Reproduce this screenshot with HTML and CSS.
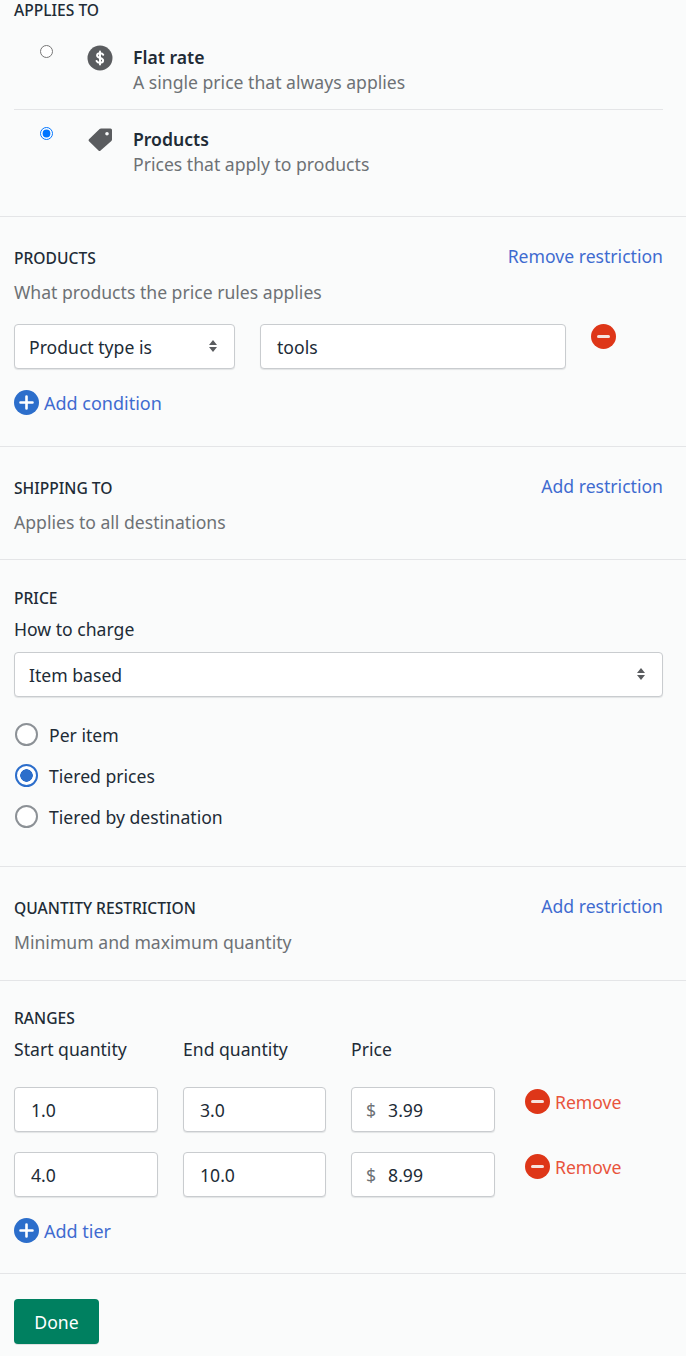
FILE: index.html
```html
<!doctype html>
<html lang="en">
  <head>
    <meta charset="UTF-8" />
    <title>Shipping rate</title>
    <link rel="stylesheet" href="styles.css">
  </head>
  <body>
    <!-- Applies to -->
    <section class="section section-applies">
      <h2 class="heading">Applies to</h2>
      <label class="option">
        <input class="option-radio" type="radio" name="applies" />
        <svg class="option-icon" viewBox="0 0 26 26">
          <circle cx="13" cy="13" r="12.500" fill="#5a5c5f" />
          <path d="M16.200 9.800c-.5-1-1.700-1.500-3.100-1.500-1.700 0-3 .8-3 2.300 0 3 6 1.700 6 4.800 0 1.500-1.400 2.300-3.200 2.300-1.500 0-2.700-.6-3.300-1.700" fill="none" stroke="#fff" stroke-width="2" stroke-linecap="round" />
          <path d="M13 6.500v13" stroke="#fff" stroke-width="2" stroke-linecap="round" />
        </svg>
        <span class="option-text">
          <strong>Flat rate</strong>
          <span>A single price that always applies</span>
        </span>
      </label>
      <label class="option">
        <input class="option-radio" type="radio" name="applies" checked />
        <svg class="option-icon" viewBox="0 0 26 26">
          <path fill-rule="evenodd" fill="#5a5c5f" d="M14 1.500h9.500a1.500 1.500 0 0 1 1.500 1.500v9.500a2 2 0 0 1-.6 1.400L13.600 23.600a1.500 1.500 0 0 1-2.100 0L2 14.300a1.500 1.500 0 0 1 0-2.100L12.600 2.100a2 2 0 0 1 1.400-.6zM20 5a1.800 1.800 0 1 0 0 3.600 1.800 1.800 0 0 0 0-3.600z" />
        </svg>
        <span class="option-text">
          <strong>Products</strong>
          <span>Prices that apply to products</span>
        </span>
      </label>
    </section>

    <!-- Products -->
    <section class="section section-products">
      <div class="section-head">
        <h2 class="heading">Products</h2>
        <a class="link" href="#">Remove restriction</a>
      </div>
      <p class="muted">What products the price rules applies</p>
      <div class="condition">
        <div class="select-wrap select-condition">
          <select class="field">
            <option>Product type is</option>
          </select>
          <svg class="select-arrows" viewBox="0 0 10 14">
            <path d="M5 1l4 5H1zM5 13L1 8h8z" fill="#5a5c5f" />
          </svg>
        </div>
        <input class="field input-condition" type="text" value="tools" />
        <svg class="round-icon" viewBox="0 0 25 25">
          <circle cx="12.500" cy="12.500" r="12.500" fill="#de3618" />
          <rect x="6" y="11" width="13" height="3" rx="1.500" fill="#f6e3df" />
        </svg>
      </div>
      <a class="link add-link" href="#">
        <svg class="round-icon" viewBox="0 0 25 25">
          <circle cx="12.500" cy="12.500" r="12.500" fill="#2c6ecb" />
          <path d="M12.500 6.500v12M6.500 12.500h12" stroke="#fff" stroke-width="2.600" stroke-linecap="round" />
        </svg>
        Add condition
      </a>
    </section>

    <!-- Shipping to -->
    <section class="section section-shipping">
      <div class="section-head">
        <h2 class="heading">Shipping to</h2>
        <a class="link" href="#">Add restriction</a>
      </div>
      <p class="muted">Applies to all destinations</p>
    </section>

    <!-- Price -->
    <section class="section section-price">
      <h2 class="heading">Price</h2>
      <label class="field-label" for="charge">How to charge</label>
      <div class="select-wrap">
        <select class="field" id="charge">
          <option>Item based</option>
        </select>
        <svg class="select-arrows" viewBox="0 0 10 14">
          <path d="M5 1l4 5H1zM5 13L1 8h8z" fill="#5a5c5f" />
        </svg>
      </div>
      <div class="radio-list">
        <label class="radio-row"><input type="radio" name="charge" />Per item</label>
        <label class="radio-row"><input type="radio" name="charge" checked />Tiered prices</label>
        <label class="radio-row"><input type="radio" name="charge" />Tiered by destination</label>
      </div>
    </section>

    <!-- Quantity restriction -->
    <section class="section section-quantity">
      <div class="section-head">
        <h2 class="heading">Quantity restriction</h2>
        <a class="link" href="#">Add restriction</a>
      </div>
      <p class="muted">Minimum and maximum quantity</p>
    </section>

    <!-- Ranges -->
    <section class="section section-ranges">
      <h2 class="heading">Ranges</h2>
      <div class="tier-grid tier-labels">
        <span>Start quantity</span>
        <span>End quantity</span>
        <span>Price</span>
      </div>
      <div class="tier-grid tier-row">
        <input class="field" type="text" value="1.0" />
        <input class="field" type="text" value="3.0" />
        <div class="money field"><span>$</span>3.99</div>
        <a class="remove-link" href="#">
          <svg class="round-icon" viewBox="0 0 25 25">
            <circle cx="12.500" cy="12.500" r="12.500" fill="#de3618" />
            <rect x="6" y="11" width="13" height="3" rx="1.500" fill="#f6e3df" />
          </svg>
          Remove
        </a>
      </div>
      <div class="tier-grid tier-row">
        <input class="field" type="text" value="4.0" />
        <input class="field" type="text" value="10.0" />
        <div class="money field"><span>$</span>8.99</div>
        <a class="remove-link" href="#">
          <svg class="round-icon" viewBox="0 0 25 25">
            <circle cx="12.500" cy="12.500" r="12.500" fill="#de3618" />
            <rect x="6" y="11" width="13" height="3" rx="1.500" fill="#f6e3df" />
          </svg>
          Remove
        </a>
      </div>
      <a class="link add-link" href="#">
        <svg class="round-icon" viewBox="0 0 25 25">
          <circle cx="12.500" cy="12.500" r="12.500" fill="#2c6ecb" />
          <path d="M12.500 6.500v12M6.500 12.500h12" stroke="#fff" stroke-width="2.600" stroke-linecap="round" />
        </svg>
        Add tier
      </a>
    </section>

    <div class="footer">
      <button class="btn-done">Done</button>
    </div>
  </body>
</html>
```

FILE: styles.css
```css
:root {
  --bg-color: #fafbfb;
  --text-color: #212b36;
  --muted-color: #6d7175;
  --link-color: #3f6bd0;
  --blue-color: #2c6ecb;
  --red-color: #de3618;
  --line-color: #e4e5e7;
  --field-border: #c9cccf;
}

* {
  box-sizing: border-box;
}

body {
  margin: 0;
  font-family: "Noto Sans", sans-serif;
  font-size: 17.6px;
  line-height: 24px;
  color: var(--text-color);
  background: var(--bg-color);
}

a {
  text-decoration: none;
}

p {
  margin: 0;
}

.section {
  padding: 27px 23px 0 14px;
  border-bottom: 1px solid var(--line-color);
}

.section-applies {
  padding-top: 1px;
  padding-bottom: 25px;
}

.section-products {
  padding-bottom: 31px;
}

.section-shipping {
  padding-bottom: 25px;
}

.section-price {
  padding-top: 24px;
  padding-bottom: 37px;
}

.section-quantity {
  padding-bottom: 26px;
}

.section-ranges {
  padding-top: 23px;
  padding-bottom: 30px;
}

.heading {
  margin: 0;
  font-size: 15.600px;
  font-weight: 500;
  line-height: 28px;
  text-transform: uppercase;
}

.section-applies .heading {
  line-height: 18px;
  margin-bottom: 9px;
}

.section-head {
  display: flex;
  justify-content: space-between;
}

.link {
  color: var(--link-color);
}

.muted {
  margin-top: 8px;
  color: var(--muted-color);
}

/* Applies to options */
.option {
  display: flex;
  padding: 17px 0 14px 26px;
  border-bottom: 1px solid var(--line-color);
}

.option:last-child {
  border-bottom: 0;
}

.option-radio {
  flex: none;
  width: 13px;
  height: 13px;
  margin: 0 34px 0 0;
}

.option-icon {
  flex: none;
  width: 26px;
  height: 26px;
  margin-right: 20px;
}

.option-text {
  display: flex;
  flex-direction: column;
  line-height: 25px;
  color: var(--muted-color);
}

.option-text strong {
  font-weight: 600;
  color: var(--text-color);
}

/* Form fields */
.field {
  width: 100%;
  height: 45px;
  padding: 0 14px;
  font: inherit;
  color: var(--text-color);
  background: #fff;
  border: 1px solid var(--field-border);
  border-radius: 4px;
  box-shadow: 0 1px 1px rgba(22, 29, 37, 0.1);
  appearance: none;
}

.select-wrap {
  position: relative;
}

.select-arrows {
  position: absolute;
  top: 15px;
  right: 17px;
  width: 10px;
  height: 14px;
}

.round-icon {
  flex: none;
  width: 25px;
  height: 25px;
}

.condition {
  display: flex;
  gap: 25px;
  margin-top: 20px;
}

.select-condition {
  flex: none;
  width: 221px;
}

.input-condition {
  flex: none;
  width: 306px;
  padding-left: 16px;
}

.add-link {
  display: flex;
  align-items: center;
  gap: 5px;
  width: max-content;
  margin-top: 21px;
  font-size: 18px;
}

/* Price */
.field-label {
  display: block;
  margin: 5px 0 11px;
}

.radio-list {
  display: flex;
  flex-direction: column;
  gap: 16px;
  margin-top: 25px;
}

.radio-row {
  display: flex;
  align-items: center;
  gap: 11px;
  height: 25px;
}

.radio-row input {
  flex: none;
  width: 23px;
  height: 23px;
  margin: 0 0 0 1px;
  background: #fff;
  border: 2px solid #8c9196;
  border-radius: 50%;
  appearance: none;
}

.radio-row input:checked {
  border-color: var(--blue-color);
  background: radial-gradient(circle, var(--blue-color) 6px, #fff 6.500px);
}

/* Ranges */
.tier-grid {
  display: grid;
  grid-template-columns: 144px 143px 144px auto;
  column-gap: 25px;
}

.tier-labels {
  margin-top: 5px;
}

.tier-row {
  height: 45px;
  margin-top: 20px;
}

.tier-row input {
  padding-left: 16px;
}

.tier-labels + .tier-row {
  margin-top: 26px;
}

.money {
  display: flex;
  align-items: center;
}

.money span {
  margin-right: 12px;
  color: var(--muted-color);
}

.remove-link {
  display: flex;
  align-items: center;
  gap: 5px;
  height: 25px;
  margin: 2px 0 0 5px;
  color: #e8543c;
}

/* Footer */
.footer {
  padding: 25px 14px 12px;
}

.btn-done {
  width: 85px;
  height: 45px;
  font: inherit;
  color: #fff;
  background: #008060;
  border: 0;
  border-radius: 4px;
  box-shadow: 0 1px 0 rgba(0, 0, 0, 0.1);
}
```
